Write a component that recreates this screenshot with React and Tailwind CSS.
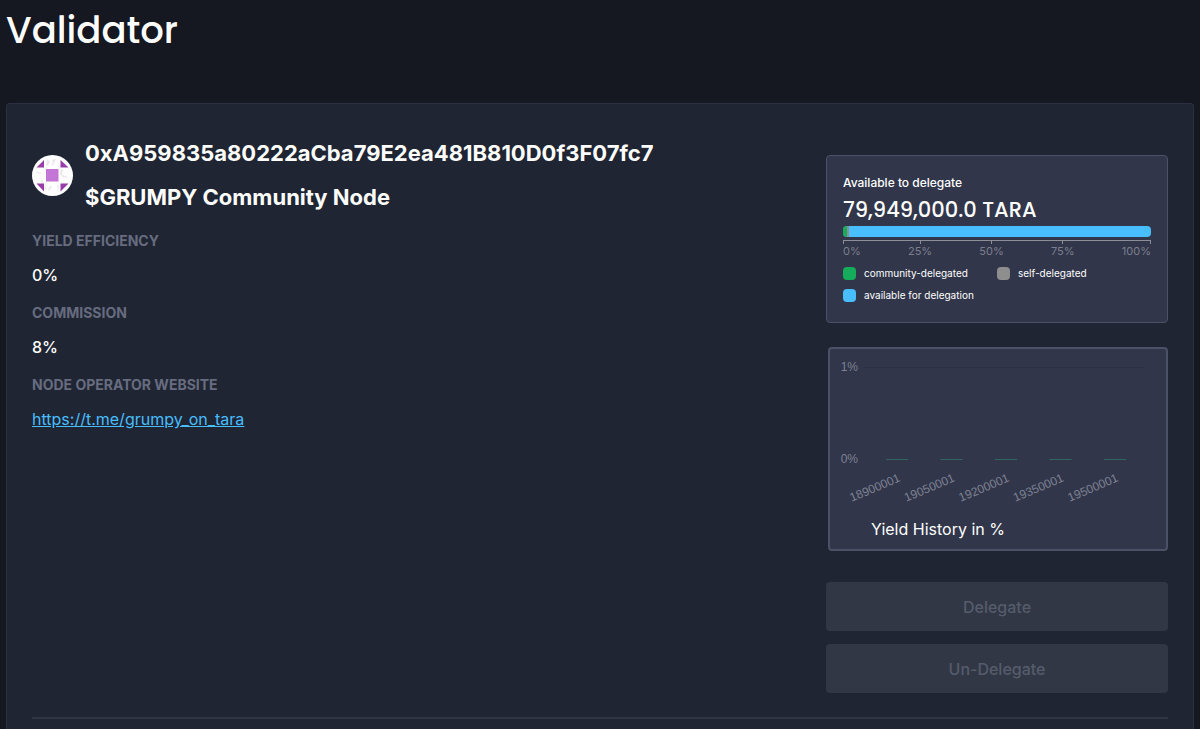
const details = [
  { label: 'Yield efficiency', value: '0%' },
  { label: 'Commission', value: '8%' },
];

const scale = [
  { label: '0%', align: 'items-start' },
  { label: '25%', align: 'items-center' },
  { label: '50%', align: 'items-center' },
  { label: '75%', align: 'items-center' },
  { label: '100%', align: 'items-end' },
];

const blocks = ['18900001', '19050001', '19200001', '19350001', '19500001'];

function Avatar() {
  return (
    <svg viewBox="0 0 41 41" className="size-[41px] shrink-0" aria-hidden="true">
      <circle cx="20.5" cy="20.5" r="20.5" fill="#fff" />
      <g fill="#ebe6ec">
        <path d="M15 5l3 1-2 5-2-1zM20 5l4-1-3 7-1-1 1-4zM29 14l2 1-1 6-2-2zM30 20l6 2-1 1-5-1zM5 17l5 1-1 1-5-1zM10 25l2 4-3-2zM18 31l2 0-3 5-1-1zM25 30l2 1-1 4zM13 31l2 4-3-2z" />
      </g>
      <rect x="14" y="14" width="12.5" height="12.5" fill="#c376d6" />
      <path d="M4.5 12.5L12 5v7.5zM28.5 5L36.5 12.5h-8zM4.5 28.5H12V36.5zM28.5 28.5h8l-8 8z" fill="#963da8" />
    </svg>
  );
}

function Legend({ color, children }) {
  return (
    <li className="flex items-center gap-2">
      <span className={`size-[13px] rounded ${color}`} />
      {children}
    </li>
  );
}

function DelegationCard() {
  return (
    <section className="rounded border border-[#4b5166] bg-[#31364a] p-4">
      <h2 className="text-xs leading-[22px] font-medium">Available to delegate</h2>
      <p className="font-['Poppins','Inter',sans-serif] text-[21px] leading-8 font-medium">79,949,000.0 TARA</p>
      <div className="flex h-[11px] overflow-hidden rounded-sm bg-[#48bdff]">
        <span className="w-1 bg-[#15ac5b]" />
        <span className="w-[2px] bg-[#8e8e8e]" />
      </div>
      <div className="mt-[3px] flex justify-between border-t border-[#8e8e99] text-[11px] leading-[14px] text-[#7c7f8d]">
        {scale.map(({ label, align }) => (
          <span key={label} className={`flex flex-col ${align}`}>
            <span className="h-[3px] w-px bg-[#8e8e99]" />
            {label}
          </span>
        ))}
      </div>
      <ul className="mt-1 grid grid-cols-2 text-[10px] leading-[22px]">
        <Legend color="bg-[#15ac5b]">community-delegated</Legend>
        <Legend color="bg-[#8e8e8e]">self-delegated</Legend>
        <Legend color="bg-[#48bdff]">available for delegation</Legend>
      </ul>
    </section>
  );
}

function YieldCard() {
  return (
    <section className="ml-0.5 rounded border-2 border-[#4b5166] bg-[#31364a] pb-1">
      <svg viewBox="0 0 336 164" className="block w-full" role="img" aria-label="Yield history chart">
        <g fill="#7d8192" fontFamily="'Liberation Sans', Arial, sans-serif" fontSize="12">
          <path d="M34 18.5H313" fill="none" stroke="#2b3042" />
          <text x="28" y="22" textAnchor="end">1%</text>
          <text x="28" y="114" textAnchor="end">0%</text>
          {blocks.map((block, i) => (
            <g key={block} transform={`translate(${67 + i * 54.5} 110)`}>
              <path d="M-11 .5H11" fill="none" stroke="#31665f" />
              <text transform="translate(4 22) rotate(-23)" textAnchor="end">{block}</text>
            </g>
          ))}
        </g>
      </svg>
      <h2 className="pl-[41px] text-base leading-8">Yield History in %</h2>
    </section>
  );
}

function ActionButton({ children }) {
  return (
    <button type="button" disabled className="h-[49px] rounded bg-[#313745] text-base font-medium text-[#565c6b]">
      {children}
    </button>
  );
}

export default function App() {
  return (
    <main className="flex min-h-screen flex-col bg-[#151721] px-1.5 font-['Inter',sans-serif] text-white">
      <h1 className="pt-[5px] pb-[47px] font-['Poppins','Inter',sans-serif] text-[37px] leading-[51px] font-medium">Validator</h1>
      <div className="flex-1 rounded-t border border-b-0 border-[#2c3142] bg-[#1f2532] px-[25px]">
        <div className="flex justify-between gap-8 border-b-2 border-[#2f3544] pb-6">
          <div className="pt-[27px]">
            <div className="flex items-center gap-3">
              <Avatar />
              <div className="text-[22px] leading-[44px] font-bold">
                <p>0xA959835a80222aCba79E2ea481B810D0f3F07fc7</p>
                <p>$GRUMPY Community Node</p>
              </div>
            </div>
            <dl className="mt-2">
              {details.map(({ label, value }) => (
                <div key={label} className="mb-3">
                  <dt className="text-sm leading-7 font-bold text-[#676c80] uppercase">{label}</dt>
                  <dd className="pt-2 text-base leading-6 font-medium">{value}</dd>
                </div>
              ))}
              <dt className="text-sm leading-7 font-bold text-[#676c80] uppercase">Node operator website</dt>
              <dd className="pt-2 text-base leading-6">
                <a href="https://t.me/grumpy_on_tara" className="text-[#48bdff] underline">https://t.me/grumpy_on_tara</a>
              </dd>
            </dl>
          </div>
          <div className="flex w-[342px] shrink-0 flex-col pt-[51px]">
            <DelegationCard />
            <div className="mt-6"><YieldCard /></div>
            <div className="mt-[31px] flex flex-col gap-[13px]">
              <ActionButton>Delegate</ActionButton>
              <ActionButton>Un-Delegate</ActionButton>
            </div>
          </div>
        </div>
      </div>
    </main>
  );
}
